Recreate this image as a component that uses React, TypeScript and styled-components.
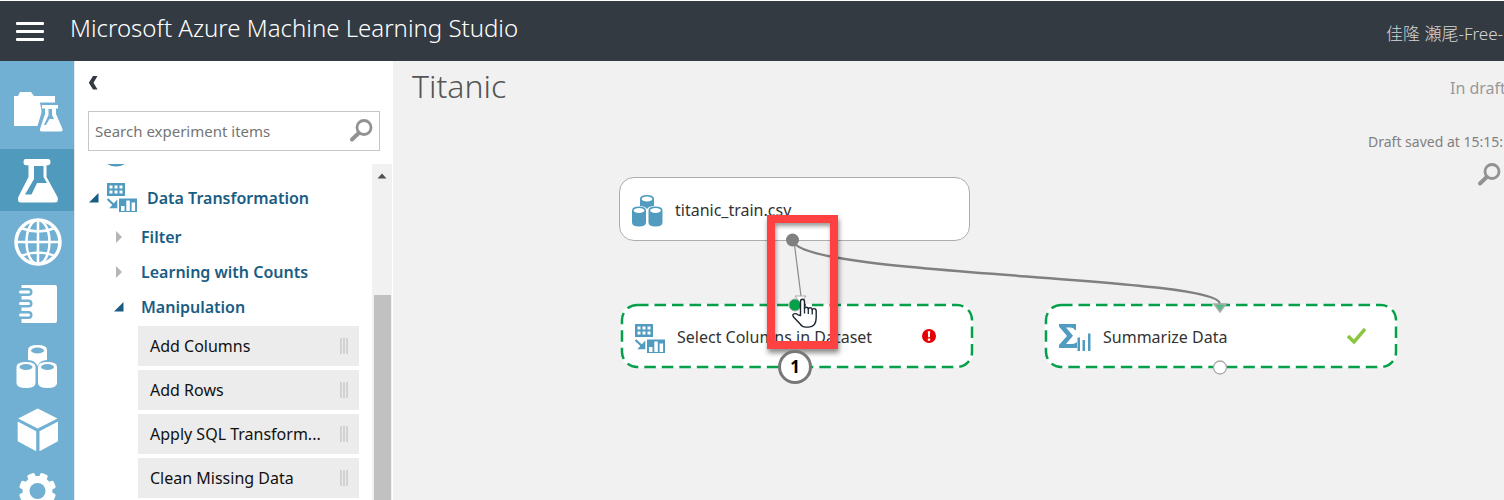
import React from "react";
import styled, { createGlobalStyle } from "styled-components";

const BLUE = "#509bbf";
const RAIL = "#72b0d3";
const RAIL_ACTIVE = "#509bbd";
const GREEN = "#05a04a";

const GlobalStyle = createGlobalStyle`
  *, *::before, *::after { box-sizing: border-box; }
  body {
    margin: 0;
    background: #fff;
    font-family: "Noto Sans", "Noto Sans CJK JP", sans-serif;
    overflow: hidden;
  }
  button { font: inherit; border: 0; background: none; padding: 0; cursor: pointer; }
  svg { display: block; flex: none; }
`;

const Page = styled.div`
  display: flex;
  flex-direction: column;
  height: 100vh;
  padding-top: 1px;
  overflow: hidden;
`;

const TopBar = styled.header`
  display: flex;
  align-items: center;
  flex: none;
  height: 60px;
  padding-left: 16px;
  background: #343a41;
  color: #fff;
`;

const MenuButton = styled.button`
  display: flex;
  flex-direction: column;
  gap: 5px;
  width: 28px;
  margin-right: 26px;
`;

const MenuLine = styled.span`
  height: 3px;
  border-radius: 1px;
  background: #fff;
`;

const Brand = styled.div`
  padding-bottom: 6px;
  font-size: 24px;
  font-weight: 300;
  line-height: 32px;
  white-space: nowrap;
`;

const Account = styled.div`
  flex: none;
  width: 118px;
  margin-left: auto;
  padding-top: 6px;
  overflow: hidden;
  color: #d3d5d7;
  font-size: 17px;
  font-weight: 300;
  line-height: 24px;
  white-space: nowrap;
`;

const Workspace = styled.div`
  display: flex;
  flex: 1;
  min-height: 0;
`;

const Rail = styled.nav`
  flex: none;
  width: 74px;
  padding-top: 26px;
  overflow: hidden;
  background: ${RAIL};
`;

const RailLink = styled.a<{ $active?: boolean }>`
  display: block;
  height: 62px;
  background: ${(p) => (p.$active ? RAIL_ACTIVE : "transparent")};
`;

const Panel = styled.aside`
  display: flex;
  flex-direction: column;
  flex: none;
  width: 319px;
  border-left: 1px solid #e4e8ea;
  background: #fff;
`;

const CollapseButton = styled.button`
  align-self: flex-start;
  flex: none;
  width: 24px;
  height: 24px;
  margin: 10px 0 16px 9px;
  padding-left: 4px;
`;

const SearchBox = styled.label`
  display: flex;
  align-items: center;
  flex: none;
  height: 40px;
  margin: 0 13px;
  padding: 0 6px;
  border: 1px solid #c6c6c6;
`;

const SearchInput = styled.input`
  flex: 1;
  min-width: 0;
  padding: 0;
  border: 0;
  outline: 0;
  background: none;
  font: 400 15px/20px "Noto Sans", sans-serif;
  &::placeholder { color: #757575; opacity: 1; }
`;

const TreeArea = styled.div`
  display: flex;
  flex: 1;
  min-height: 0;
  margin-top: 13px;
  padding-right: 1px;
`;

const Tree = styled.div`
  flex: 1;
  min-width: 0;
  overflow: hidden;
`;

const ClippedRow = styled.div`
  height: 12px;
  padding-left: 32px;
`;

const GroupRow = styled.button<{ $level: number }>`
  display: flex;
  align-items: center;
  width: 100%;
  height: ${(p) => (p.$level === 0 ? 43 : 35)}px;
  padding-left: ${(p) => (p.$level === 0 ? 14 : 39)}px;
  color: #1a5d84;
  font-size: 16px;
  font-weight: 600;
  white-space: nowrap;
`;

const Marker = styled.span<{ $level: number }>`
  flex: none;
  width: ${(p) => (p.$level === 0 ? 18 : 27)}px;
`;

const GroupIcon = styled.span`
  width: 40px;
`;

const ModuleList = styled.div`
  display: flex;
  flex-direction: column;
  gap: 4px;
  margin: 2px 13px 0 63px;
`;

const Module = styled.button`
  display: flex;
  flex: none;
  align-items: center;
  justify-content: space-between;
  height: 40px;
  padding: 0 11px 1px 12px;
  background: #ececec;
  color: #111;
  font-size: 16px;
  white-space: nowrap;
`;

const Grip = styled.span`
  width: 8px;
  height: 16px;
  border: solid #d2d2d2;
  border-width: 0 2px;
  background: linear-gradient(90deg, transparent 1px, #d2d2d2 1px, #d2d2d2 3px, transparent 3px);
`;

const ScrollTrack = styled.div`
  display: flex;
  flex-direction: column;
  flex: none;
  width: 20px;
  background: #f1f1f1;
`;

const ScrollUp = styled.button`
  height: 24px;
  margin-bottom: 107px;
  padding-left: 5px;
`;

const ScrollThumb = styled.div`
  flex: 1;
  margin: 0 1px 0 2px;
  background: #c1c1c1;
`;

const Canvas = styled.main`
  position: relative;
  flex: 1;
  min-width: 0;
  overflow: hidden;
  background: #f1f1f1;
`;

const CanvasHead = styled.div`
  display: flex;
  justify-content: space-between;
  padding-left: 19px;
`;

const Title = styled.h1`
  margin: 0;
  color: #555;
  font-size: 32px;
  font-weight: 300;
  line-height: 50px;
`;

const Status = styled.div`
  display: flex;
  flex-direction: column;
  flex: none;
  width: 136px;
  color: #808080;
  white-space: nowrap;
`;

const StatusState = styled.span`
  margin: 15px 0 30px 82px;
  color: #999;
  font-size: 16px;
  line-height: 24px;
`;

const StatusSaved = styled.span`
  font-size: 14px;
  line-height: 24px;
`;

const ZoomButton = styled.button`
  width: 24px;
  height: 24px;
  margin: 9px 0 0 109px;
`;

const Node = styled.div<{ $x: number; $y: number; $plain?: boolean }>`
  position: absolute;
  left: ${(p) => p.$x}px;
  top: ${(p) => p.$y}px;
  display: flex;
  align-items: center;
  width: ${(p) => (p.$plain ? 351 : 352)}px;
  height: 64px;
  padding: 4px 31px 0 ${(p) => (p.$plain ? 12 : 14)}px;
  border: ${(p) => (p.$plain ? "1px solid #adadad" : "0")};
  border-radius: 15px;
  background: #fff;
  color: #333;
  font-size: 16px;
  white-space: nowrap;
`;

const NodeOutline = styled.svg`
  position: absolute;
  inset: 0;
  width: 100%;
  height: 100%;
  overflow: visible;
`;

const NodeLabel = styled.span`
  margin: 0 auto 0 12px;
  padding-bottom: 2px;
`;

const Links = styled.svg`
  position: absolute;
  left: 0;
  top: 0;
  pointer-events: none;
`;

const Highlight = styled.div`
  position: absolute;
  left: 374px;
  top: 154px;
  width: 71px;
  height: 134px;
  border: 8px solid #ff4141;
  box-shadow: 1px 4px 5px rgba(0, 0, 0, 0.45), inset 1px 3px 4px rgba(0, 0, 0, 0.4);
`;

const StepBadge = styled.div`
  position: absolute;
  left: 385px;
  top: 289px;
  width: 34px;
  height: 34px;
  border: 3px solid #777;
  border-radius: 50%;
  background: #fff;
  color: #000;
  font-size: 17px;
  font-weight: 700;
  line-height: 28px;
  text-align: center;
`;

const Pointer = styled.svg`
  position: absolute;
  left: 398px;
  top: 236px;
`;

function RailSvg({ children }: { children: React.ReactNode }) {
  return (
    <svg width="74" height="62" viewBox="0 0 74 62" fill="#fff" aria-hidden="true">
      {children}
    </svg>
  );
}

const ProjectsIcon = () => (
  <RailSvg>
    <path d="M14 9h4l2-4h11l3 4h21v30H14z" />
    <path d="M43 18h14v5l5.500 18q.5 3-2 3H41.500q-2.500 0-2-3l4.500-15v-3z" stroke={RAIL} strokeWidth="5" />
    <path d="M42 18h16v3.500h-2V27l6.500 15q.5 2.500-2 2.500H42q-2.500 0-2-2.500l5-15v-5.500h-3z" />
    <path d="M48.500 22h3.500v6l2 4h-4.500l-3.500 6h-2l4.500-10z" fill={RAIL} />
  </RailSvg>
);

const ExperimentsIcon = () => (
  <RailSvg>
    <path d="M25 10h23q2.500 0 2.500 3t-2.500 3.200h-1.500V28L57.500 48q1.800 5.500-3 5.500H21.500q-5 0-3.200-5.500L28.500 28V16.200H26q-2.500 0-2.500-3T25 10z" />
    <path d="M34 17h9.500v11l3.500 6h-10l-5.500 11.500h-6.500L34 30z" fill={RAIL_ACTIVE} />
  </RailSvg>
);

const GlobeIcon = () => (
  <RailSvg>
    <g fill="none" stroke="#fff" strokeWidth="2.500">
      <circle cx="38" cy="31" r="22" strokeWidth="3.500" />
      <ellipse cx="38" cy="31" rx="11.500" ry="22" />
      <path d="M38 9v44M16 31h44M21 17q17 7 34 0M21 45q17-7 34 0" />
    </g>
  </RailSvg>
);

const NotebookIcon = () => (
  <RailSvg>
    <path d="M21.500 12H55q2 0 2 2v34q0 2-2 2H21.500z" />
    {[19, 30.500, 42].map((y) => (
      <g key={y} fill="none" strokeLinecap="round">
        <path d={`M20 ${y}h8.500`} stroke={RAIL} strokeWidth="8" />
        <path d={`M20.500 ${y}h8`} stroke="#fff" strokeWidth="3" />
      </g>
    ))}
  </RailSvg>
);

const DatasetsRailIcon = () => (
  <RailSvg>
    <path d="M28 15q0-5 9.500-5t9.500 5v10q-7 0-9.500 6q-2.500-6-9.500-6z" />
    <ellipse cx="37.500" cy="15.500" rx="6.500" ry="3" fill={RAIL} />
    <path d="M16.500 32q0-5 9.500-5t9.500 5v16q0 5-9.500 5t-9.500-5zM38 32q0-5 9.500-5t9.500 5v16q0 5-9.500 5t-9.500-5z" />
    <ellipse cx="26" cy="32" rx="6.500" ry="3" fill={RAIL} />
    <ellipse cx="47.500" cy="32" rx="6.500" ry="3" fill={RAIL} />
  </RailSvg>
);

const ModelsIcon = () => (
  <RailSvg>
    <path d="M37.700 11.500L57.500 21.500L37.700 31.500L18.200 21.500zM17.700 24.500L36.200 34.200V54.300L17.700 44.300zM58 24.500L39.500 34.200V54.300L58 44.300z" />
  </RailSvg>
);

const SettingsIcon = () => (
  <RailSvg>
    {[22.5, 67.5, 112.5, 157.5].map((a) => (
      <rect key={a} x="33.500" y="13.500" width="8" height="37" rx="2" transform={`rotate(${a} 37.500 32)`} />
    ))}
    <circle cx="37.500" cy="32" r="11.500" fill="none" stroke="#fff" strokeWidth="7" />
    <circle cx="37.500" cy="32" r="8" fill={RAIL} />
  </RailSvg>
);

const SearchIcon = () => (
  <svg width="24" height="24" viewBox="0 0 24 24" fill="none" stroke="#929292" aria-hidden="true">
    <circle cx="15" cy="8.500" r="7" strokeWidth="2.800" />
    <path d="M9.800 14L3 20.500" strokeWidth="4" strokeLinecap="round" />
  </svg>
);

const TransformIcon = () => (
  <svg width="30" height="29" viewBox="0 0 30 29" aria-hidden="true">
    <path d="M0 0h18v13H0z" fill={BLUE} />
    <path d="M2.500 2.500h3v3h-3zM7.500 2.500h3v3h-3zM12.500 2.500h3v3h-3zM2.500 7.500h3v3h-3zM7.500 7.500h3v3h-3zM12.500 7.500h3v3h-3z" fill="#fff" />
    <path d="M.5 16l7 6.500" stroke={BLUE} strokeWidth="2.200" />
    <path d="M10.300 16.500V25.300H2.300z" fill={BLUE} />
    <path d="M12 15.500h18V29H12z" fill={BLUE} />
    <path d="M14 23h3.500V28H14zM19.300 17.500h3.500V28h-3.500zM24.600 19.500h3.500V28h-3.500z" fill="#fff" />
  </svg>
);

const DatasetIcon = () => (
  <svg width="31" height="32" viewBox="0 0 31 32" aria-hidden="true">
    <g fill={BLUE}>
      <path d="M8 4q0-4 7-4t7 4v7q-5 0-7 3q-2-3-7-3z" />
      <path d="M0 15.500q0-4 7-4t7 4v12q0 4-7 4t-7-4zM16.500 15.500q0-4 7-4t7 4v12q0 4-7 4t-7-4z" />
    </g>
    <g fill="#fff">
      <ellipse cx="15" cy="4" rx="5.300" ry="2.500" />
      <ellipse cx="7" cy="15.500" rx="5.300" ry="2.500" />
      <ellipse cx="23.500" cy="15.500" rx="5.300" ry="2.500" />
    </g>
  </svg>
);

const SummaryIcon = () => (
  <svg width="32" height="28" viewBox="0 0 32 28" fill={BLUE} aria-hidden="true">
    <path d="M0 0h17v6h-1.200q-.8-2.500-4-2.500H7l7 8.200L7 20h6q3 0 5-2v6H0V21l8-9L0 2.500z" />
    <path d="M18.500 13.500h2.500V27h-2.500zM23.500 16h2.500v11h-2.500zM29 9.500h2.500V27H29z" />
  </svg>
);

const OpenMarker = () => (
  <svg width="10" height="10" viewBox="0 0 10 10" aria-hidden="true">
    <path d="M9.500 0v9.500H0z" fill="#1a5d84" />
  </svg>
);

const ClosedMarker = () => (
  <svg width="10" height="12" viewBox="0 0 10 12" aria-hidden="true">
    <path d="M2 0l6 6l-6 6z" fill="#b5b5b5" />
  </svg>
);

const DashedOutline = () => (
  <NodeOutline aria-hidden="true">
    <rect x="1" y="1" width="350" height="62" rx="15" fill="none" stroke={GREEN} strokeWidth="2.500" strokeDasharray="11.500 6" />
  </NodeOutline>
);

const railItems = [
  { name: "Projects", Icon: ProjectsIcon },
  { name: "Experiments", Icon: ExperimentsIcon },
  { name: "Web services", Icon: GlobeIcon },
  { name: "Notebooks", Icon: NotebookIcon },
  { name: "Datasets", Icon: DatasetsRailIcon },
  { name: "Trained models", Icon: ModelsIcon },
  { name: "Settings", Icon: SettingsIcon },
];

const groups = [
  { name: "Filter", open: false },
  { name: "Learning with Counts", open: false },
  { name: "Manipulation", open: true },
];

const modules = ["Add Columns", "Add Rows", "Apply SQL Transform...", "Clean Missing Data"];

export default function App() {
  return (
    <Page>
      <GlobalStyle />
      <TopBar>
        <MenuButton aria-label="Menu">
          <MenuLine />
          <MenuLine />
          <MenuLine />
        </MenuButton>
        <Brand>Microsoft Azure Machine Learning Studio</Brand>
        <Account>佳隆 瀬尾-Free-</Account>
      </TopBar>
      <Workspace>
        <Rail>
          {railItems.map(({ name, Icon }) => (
            <RailLink key={name} href="#" aria-label={name} $active={name === "Experiments"}>
              <Icon />
            </RailLink>
          ))}
        </Rail>
        <Panel>
          <CollapseButton aria-label="Collapse panel">
            <svg width="12" height="14" viewBox="0 0 12 14" aria-hidden="true">
              <path d="M5 0h4.500L5.500 6.800l4 6.700H5L.8 6.800z" fill="#343a41" />
            </svg>
          </CollapseButton>
          <SearchBox>
            <SearchInput type="text" placeholder="Search experiment items" aria-label="Search experiment items" />
            <SearchIcon />
          </SearchBox>
          <TreeArea>
            <Tree>
              <ClippedRow>
                <svg width="18" height="3" viewBox="0 0 18 3" aria-hidden="true">
                  <path d="M0 0h18q-9 5-18 0z" fill={BLUE} />
                </svg>
              </ClippedRow>
              <GroupRow $level={0}>
                <Marker $level={0}>
                  <OpenMarker />
                </Marker>
                <GroupIcon>
                  <TransformIcon />
                </GroupIcon>
                Data Transformation
              </GroupRow>
              {groups.map((g) => (
                <GroupRow key={g.name} $level={1}>
                  <Marker $level={1}>{g.open ? <OpenMarker /> : <ClosedMarker />}</Marker>
                  {g.name}
                </GroupRow>
              ))}
              <ModuleList>
                {modules.map((m) => (
                  <Module key={m}>
                    {m}
                    <Grip />
                  </Module>
                ))}
              </ModuleList>
            </Tree>
            <ScrollTrack>
              <ScrollUp aria-label="Scroll up">
                <svg width="10" height="6" viewBox="0 0 10 6" aria-hidden="true">
                  <path d="M5 .5L9.500 5.500H.5z" fill="#505050" />
                </svg>
              </ScrollUp>
              <ScrollThumb />
            </ScrollTrack>
          </TreeArea>
        </Panel>
        <Canvas>
          <CanvasHead>
            <Title>Titanic</Title>
            <Status>
              <StatusState>In draft</StatusState>
              <StatusSaved>Draft saved at 15:15:</StatusSaved>
              <ZoomButton aria-label="Search experiment">
                <SearchIcon />
              </ZoomButton>
            </Status>
          </CanvasHead>

          <Node $x={226} $y={116} $plain>
            <DatasetIcon />
            <NodeLabel>titanic_train.csv</NodeLabel>
          </Node>
          <Node $x={228} $y={243}>
            <DashedOutline />
            <TransformIcon />
            <NodeLabel>Select Columns in Dataset</NodeLabel>
            <svg width="20" height="20" viewBox="0 0 20 20" role="img" aria-label="Error">
              <circle cx="7" cy="8" r="7" fill="#e50000" />
              <path d="M5.800 3.200h2.400l-.3 6H6.100zM5.800 10.500h2.400v2.200H5.800z" fill="#fff" />
            </svg>
          </Node>
          <Node $x={652} $y={243}>
            <DashedOutline />
            <SummaryIcon />
            <NodeLabel>Summarize Data</NodeLabel>
            <svg width="20" height="20" viewBox="0 0 20 20" role="img" aria-label="Ready">
              <path d="M2 8l6 6L19 1" fill="none" stroke="#8cc63f" strokeWidth="3.500" />
            </svg>
          </Node>

          <Links width="1111" height="439" aria-hidden="true">
            <path d="M400 179C400 215 827 215 827 243" fill="none" stroke="#808080" strokeWidth="2.500" />
            <path d="M401 180L408 235" stroke="#8a8a8a" strokeWidth="1.200" />
            <circle cx="399.500" cy="179" r="6.500" fill="#808080" />
            <circle cx="402" cy="244" r="6" fill={GREEN} stroke="#aaa" />
            <path d="M402 235h11l-5.500 7z" fill="#fff" stroke="#aaa" />
            <path d="M821 243h12l-6 8z" fill="#4fbf85" stroke="#aaa" strokeWidth="1.500" />
            <circle cx="827" cy="306.500" r="6.500" fill="#fff" stroke="#aaa" strokeWidth="1.300" />
          </Links>
          <Highlight />
          <StepBadge>1</StepBadge>
          <Pointer width="28" height="34" viewBox="0 0 28 34" aria-hidden="true">
            <path
              d="M9.500 18.500V4.500q0-2.300 2-2.300t2 2.300v7q0-1.200 1.800-1.200t2 1.800q.2-1.300 1.900-1.300t2 2q.2-1.200 1.800-1.200q2.200 0 2.200 2.500v6.500q0 9.500-7.500 9.500h-3q-3.500 0-5.500-3L2.500 20q-1.500-2.500.5-3.200q2-.6 4 1z"
              fill="#fff"
              stroke="#1d2430"
              strokeWidth="1.400"
              strokeLinejoin="round"
            />
            <path d="M13.500 11v5.500M17.300 12v5M21.200 13v4.500" stroke="#1d2430" strokeWidth="1.300" />
          </Pointer>
        </Canvas>
      </Workspace>
    </Page>
  );
}
